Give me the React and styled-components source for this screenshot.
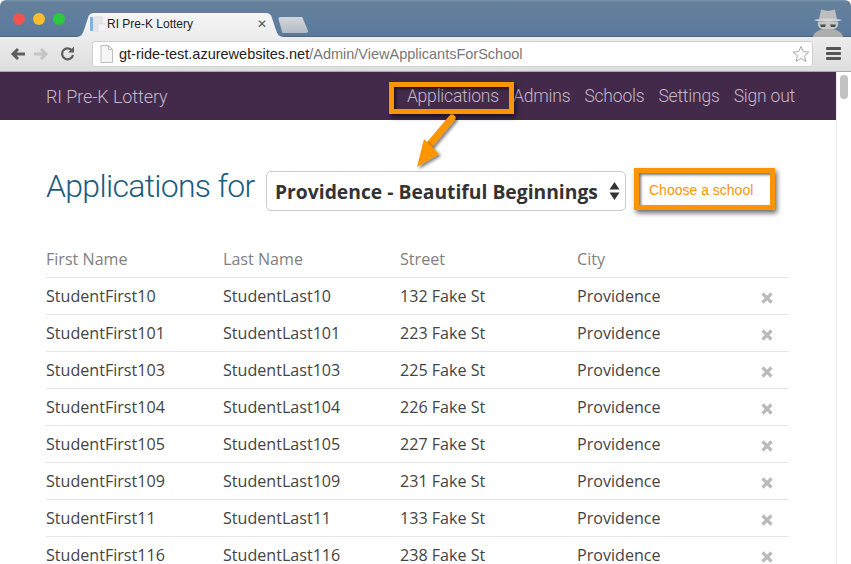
import React from 'react';
import styled, { createGlobalStyle } from 'styled-components';

const GlobalStyle = createGlobalStyle`
  html, body {
    margin: 0;
    padding: 0;
    background: #fff;
    overflow: hidden;
  }
`;

const Window = styled.div`
  position: relative;
  width: 851px;
  height: 564px;
  overflow: hidden;
  display: flex;
  flex-direction: column;
  border-radius: 6px 6px 0 0;
  font-family: 'Open Sans', sans-serif;
`;

const TitleBar = styled.div`
  position: relative;
  flex: 0 0 37px;
  display: flex;
  align-items: flex-end;
  box-sizing: border-box;
  padding: 0 0 0 76px;
  background: linear-gradient(#7d96b2 0, #658099 2px, #5f7d9f 60%, #5a7899 100%);
  border-bottom: 1px solid #4f6680;
`;

const Lights = styled.div`
  position: absolute;
  left: 13px;
  top: 13px;
  display: flex;
  gap: 8px;
`;

const Light = styled.span`
  width: 12px;
  height: 12px;
  border-radius: 50%;
  background: ${({ $color }) => $color};
`;

const Tab = styled.div`
  width: 208px;
  height: 24px;
  margin-bottom: -1px;
  display: flex;
  align-items: center;
  box-sizing: border-box;
  padding: 0 0 2px 14px;
  background: linear-gradient(#f5f5f5, #ececec);
  clip-path: path('M0 24 C6 24 7 20 9 14 L12 5 C13 1 15 0 19 0 L189 0 C193 0 195 1 196 5 L199 14 C201 20 202 24 208 24 Z');
  font: 12px 'Liberation Sans', sans-serif;
  color: #222;
`;

const TabTitle = styled.span`
  margin-left: 1px;
  flex: 1;
`;

const TabClose = styled.span`
  margin-right: 17px;
  font-size: 12px;
  color: #555;
`;

const NewTab = styled.div`
  width: 31px;
  height: 16px;
  margin: 0 0 3px -6px;
  background: linear-gradient(#d2d6da, #b4bbc4);
  border-radius: 3px 3px 4px 4px;
  clip-path: polygon(0 0, 78% 0, 100% 100%, 14% 100%);
`;

const Incognito = styled.svg`
  position: absolute;
  right: 5px;
  top: 7px;
`;

const Toolbar = styled.div`
  flex: 0 0 35px;
  display: flex;
  align-items: center;
  box-sizing: border-box;
  padding: 0 0 1px 10px;
  background: linear-gradient(#ececec, #dedede);
  border-bottom: 1px solid #a9a9a9;
`;

const ToolIcons = styled.div`
  flex: 0 0 82px;
  display: flex;
  align-items: center;
  gap: 7px;
`;

const Omnibox = styled.div`
  flex: 0 0 721px;
  height: 26px;
  display: flex;
  align-items: center;
  box-sizing: border-box;
  padding: 0 2px 0 7px;
  background: #fff;
  border: 1px solid #cfcfcf;
  border-radius: 3px;
  font: 14.5px 'Liberation Sans', sans-serif;
  color: #777;
`;

const Host = styled.span`
  margin-left: 6px;
  flex: 1;
  color: #222;

  span {
    color: #777;
  }
`;

const Menu = styled.div`
  margin-left: 13px;
  display: flex;
  flex-direction: column;
  gap: 2px;

  i {
    display: block;
    width: 15px;
    height: 3px;
    border-radius: 1px;
    background: #555;
  }
`;

const Viewport = styled.div`
  flex: 1;
  min-height: 0;
  display: flex;
`;

const Page = styled.div`
  flex: 0 0 836px;
  min-width: 0;
`;

const Scrollbar = styled.div`
  flex: 1;
  box-sizing: border-box;
  padding: 3px 3px 0 3px;
  background: #fff;
  border-left: 1px solid #ececec;
`;

const Thumb = styled.div`
  width: 8px;
  height: 24px;
  border-radius: 4px;
  background: #c2c2c2;
`;

const Nav = styled.nav`
  height: 48px;
  display: flex;
  align-items: center;
  justify-content: space-between;
  box-sizing: border-box;
  padding: 0 41px 0 46px;
  background: #432a4a;
  font-family: Roboto, sans-serif;
  font-weight: 300;
  color: #c5b8c8;
`;

const NavBrand = styled.span`
  font-size: 18px;
  letter-spacing: -0.1px;
`;

const NavLinks = styled.div`
  display: flex;
  gap: 14px;
  font-size: 17.500px;
  letter-spacing: -0.2px;
`;

const Content = styled.main`
  padding: 0 47px 0 46px;
`;

const HeadingRow = styled.div`
  display: flex;
  align-items: center;
  height: 99px;
  box-sizing: border-box;
  margin-top: 21px;
`;

const Heading = styled.h1`
  margin: 0 11px 0 0;
  width: 209px;
  white-space: nowrap;
  font-family: Roboto, sans-serif;
  font-weight: 300;
  font-size: 32px;
  letter-spacing: -0.7px;
  color: #1a5c82;
  position: relative;
  top: -5px;
`;

const SchoolSelect = styled.div`
  width: 360px;
  height: 40px;
  display: flex;
  align-items: center;
  justify-content: space-between;
  box-sizing: border-box;
  padding: 1px 5px 0 8px;
  border: 1px solid #ccc;
  border-radius: 5px;
  background: #fff;
  font-weight: 700;
  font-size: 19.300px;
  color: #333;
  white-space: nowrap;
`;

const Table = styled.table`
  width: 743px;
  table-layout: fixed;
  border-collapse: collapse;
  font-size: 16.100px;
  color: #444;
`;

const Th = styled.th`
  width: ${({ $w }) => $w || 177}px;
  height: 37px;
  padding: 0;
  text-align: left;
  font-weight: 400;
  color: #808080;
  border-bottom: 1px solid #e6e6e6;
`;

const Td = styled.td`
  height: 36px;
  padding: 0;
  border-bottom: 1px solid #e6e6e6;
  white-space: nowrap;
`;

const RemoveCell = styled(Td)`
  text-align: right;
  padding-right: 16px;
`;

const Callout = styled.div`
  position: absolute;
  box-sizing: border-box;
  left: ${({ $x }) => $x}px;
  top: ${({ $y }) => $y}px;
  width: ${({ $w }) => $w}px;
  height: ${({ $h }) => $h}px;
  border: 5px solid #fb9506;
  box-shadow: 2px 3px 5px rgba(0, 0, 0, 0.6), inset 2px 2px 3px rgba(0, 0, 0, 0.55);
`;

const ChooseText = styled.span`
  position: absolute;
  left: 649px;
  top: 182px;
  font: 14px 'Liberation Sans', sans-serif;
  color: #fb9506;
`;

const Arrow = styled.svg`
  position: absolute;
  left: 410px;
  top: 110px;
  overflow: visible;
`;

const rows = [
  ['StudentFirst10', 'StudentLast10', '132 Fake St'],
  ['StudentFirst101', 'StudentLast101', '223 Fake St'],
  ['StudentFirst103', 'StudentLast103', '225 Fake St'],
  ['StudentFirst104', 'StudentLast104', '226 Fake St'],
  ['StudentFirst105', 'StudentLast105', '227 Fake St'],
  ['StudentFirst109', 'StudentLast109', '231 Fake St'],
  ['StudentFirst11', 'StudentLast11', '133 Fake St'],
  ['StudentFirst116', 'StudentLast116', '238 Fake St'],
];

const PageIcon = () => (
  <svg width="13" height="18" viewBox="0 0 13 18">
    <path d="M1 .5h7.500L12.500 4.500V17.500H1Z" fill="#f6f6f6" stroke="#bdbdbd" />
    <path d="M8.500.5V4.500h4" fill="none" stroke="#bdbdbd" />
  </svg>
);

const Remove = () => (
  <svg width="12" height="12" viewBox="0 0 12 12" style={{ verticalAlign: 'middle' }}>
    <path d="M1.500 1.500L10.500 10.500M10.500 1.500L1.500 10.500" stroke="#bbb" strokeWidth="3.200" />
  </svg>
);

const App = () => (
  <Window>
    <GlobalStyle />
    <TitleBar>
      <Lights>
        <Light $color="#f0544f" />
        <Light $color="#fbbc2e" />
        <Light $color="#2bc840" />
      </Lights>
      <Tab>
        <svg width="16" height="16" viewBox="0 0 16 16">
          <rect x="0" y="1" width="3" height="14" fill="#7fb2e0" />
          <rect x="4" y="1" width="8" height="14" fill="#e4e6ea" stroke="#c8ccd2" strokeWidth="0.500" />
          <rect x="8" y="8" width="8" height="8" fill="#f4f4f6" stroke="#d0d0d4" strokeWidth="0.500" />
        </svg>
        <TabTitle>RI Pre-K Lottery</TabTitle>
        <TabClose>✕</TabClose>
      </Tab>
      <NewTab />
      <Incognito width="36" height="30" viewBox="0 0 34 30">
        <path d="M8 12L10 2.500L17 4L24 2.500L26 12Z" fill="#bdbdbd" />
        <path d="M3 13C10 11 24 11 31 13C26 15.500 8 15.500 3 13Z" fill="#d4d4d4" />
        <path d="M7 15H27C28 20 25 23 17 23C9 23 6 20 7 15Z" fill="#c8c8c8" />
        <path d="M9 17.500H15L14 20H10ZM19 17.500H25L24 20H20Z" fill="#4a4a4a" />
        <path d="M2 30C3 25 8 23 12 22H22C26 23 31 25 32 30Z" fill="#adadad" />
      </Incognito>
    </TitleBar>
    <Toolbar>
      <ToolIcons>
        <svg width="16" height="14" viewBox="0 0 16 14">
          <path d="M15 7H4M8 2L3 7L8 12" fill="none" stroke="#5e5e5e" strokeWidth="3" />
        </svg>
        <svg width="16" height="14" viewBox="0 0 16 14">
          <path d="M1 7H12M8 2L13 7L8 12" fill="none" stroke="#c4c4c4" strokeWidth="3" />
        </svg>
        <svg width="15" height="15" viewBox="0 0 15 15" style={{ marginLeft: 4 }}>
          <path d="M12 4.500A5.500 5.500 0 1 0 13 9" fill="none" stroke="#5e5e5e" strokeWidth="2.200" />
          <path d="M14 0.500V6.500H8Z" fill="#5e5e5e" />
        </svg>
      </ToolIcons>
      <Omnibox>
        <PageIcon />
        <Host>
          gt-ride-test.azurewebsites.net<span>/Admin/ViewApplicantsForSchool</span>
        </Host>
        <svg width="18" height="18" viewBox="0 0 18 18">
          <path d="M9 1.500L11.200 6.600L16.800 7.100L12.600 10.800L13.900 16.300L9 13.400L4.100 16.300L5.400 10.800L1.200 7.100L6.800 6.600Z" fill="#fff" stroke="#a8a8a8" />
        </svg>
      </Omnibox>
      <Menu>
        <i />
        <i />
        <i />
      </Menu>
    </Toolbar>
    <Viewport>
      <Page>
        <Nav>
          <NavBrand>RI Pre-K Lottery</NavBrand>
          <NavLinks>
            <span>Applications</span>
            <span>Admins</span>
            <span>Schools</span>
            <span>Settings</span>
            <span>Sign out</span>
          </NavLinks>
        </Nav>
        <Content>
          <HeadingRow>
            <Heading>Applications for</Heading>
            <SchoolSelect>
              Providence - Beautiful Beginnings
              <svg width="11" height="20" viewBox="0 0 11 20">
                <path d="M5.500 1L10.500 8.500H.5ZM5.500 19L.5 11.500H10.500Z" fill="#333" />
              </svg>
            </SchoolSelect>
          </HeadingRow>
          <Table>
            <thead>
              <tr>
                <Th>First Name</Th>
                <Th>Last Name</Th>
                <Th>Street</Th>
                <Th>City</Th>
                <Th $w={35} />
              </tr>
            </thead>
            <tbody>
              {rows.map(([first, last, street]) => (
                <tr key={first}>
                  <Td>{first}</Td>
                  <Td>{last}</Td>
                  <Td>{street}</Td>
                  <Td>Providence</Td>
                  <RemoveCell>
                    <Remove />
                  </RemoveCell>
                </tr>
              ))}
            </tbody>
          </Table>
        </Content>
      </Page>
      <Scrollbar>
        <Thumb />
      </Scrollbar>
    </Viewport>

    <Callout $x={389} $y={82} $w={125} $h={32} />
    <Callout $x={634} $y={168} $w={141} $h={42} />
    <ChooseText>Choose a school</ChooseText>
    <Arrow width="50" height="60" viewBox="0 0 50 60">
      <defs>
        <filter id="arrowShadow" x="-30%" y="-30%" width="160%" height="160%">
          <feDropShadow dx="2" dy="2" stdDeviation="1.500" floodColor="#000" floodOpacity="0.500" />
        </filter>
      </defs>
      <path d="M42 8L20 34" stroke="#fb9506" strokeWidth="7" strokeLinecap="round" filter="url(#arrowShadow)" />
      <path d="M7 57L14 29L29 44Z" fill="#fb9506" filter="url(#arrowShadow)" />
    </Arrow>
  </Window>
);

export default App;
